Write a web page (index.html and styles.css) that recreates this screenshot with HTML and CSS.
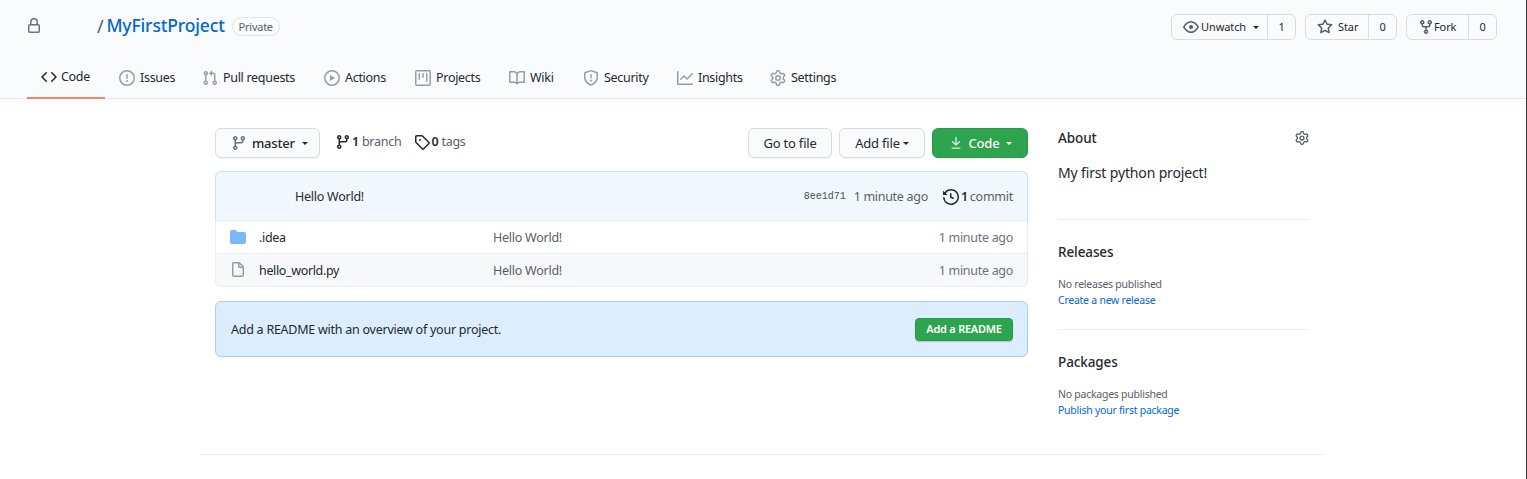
FILE: index.html
```html
<!DOCTYPE html>
<html lang="en">
<head>
<meta charset="utf-8">
<title>MyFirstProject</title>
<link rel="stylesheet" href="styles.css">
</head>
<body>
<svg class="defs" width="0" height="0" aria-hidden="true">
<symbol id="i-code" viewBox="0 0 16 16"><path fill-rule="evenodd" d="M4.72 3.22a.75.75 0 011.06 1.06L2.06 8l3.72 3.72a.75.75 0 11-1.06 1.06L.47 8.53a.75.75 0 010-1.06l4.25-4.25zm6.56 0a.75.75 0 10-1.06 1.06L13.94 8l-3.72 3.72a.75.75 0 101.06 1.06l4.25-4.25a.75.75 0 000-1.06l-4.25-4.25z"/></symbol>
<symbol id="i-issue" viewBox="0 0 16 16"><path fill-rule="evenodd" d="M8 1.5a6.5 6.5 0 100 13 6.5 6.5 0 000-13zM0 8a8 8 0 1116 0A8 8 0 010 8zm9 3a1 1 0 11-2 0 1 1 0 012 0zm-.25-6.25a.75.75 0 00-1.5 0v3.5a.75.75 0 001.5 0v-3.5z"/></symbol>
<symbol id="i-pr" viewBox="0 0 16 16"><path fill-rule="evenodd" d="M7.177 3.073L9.573.677A.25.25 0 0110 .854v4.792a.25.25 0 01-.427.177L7.177 3.427a.25.25 0 010-.354zM3.75 2.5a.75.75 0 100 1.5.75.75 0 000-1.5zm-2.25.75a2.25 2.25 0 113 2.122v5.256a2.251 2.251 0 11-1.5 0V5.372A2.25 2.25 0 011.5 3.25zM11 2.5h-1V4h1a1 1 0 011 1v5.628a2.251 2.251 0 101.5 0V5A2.5 2.5 0 0011 2.5zm1 10.25a.75.75 0 111.5 0 .75.75 0 01-1.5 0zM3.75 12a.75.75 0 100 1.5.75.75 0 000-1.5z"/></symbol>
<symbol id="i-play" viewBox="0 0 16 16"><path fill-rule="evenodd" d="M1.5 8a6.5 6.5 0 1113 0 6.5 6.5 0 01-13 0zM8 0a8 8 0 100 16A8 8 0 008 0zM6.379 5.227A.25.25 0 006 5.442v5.117a.25.25 0 00.379.214l4.264-2.559a.25.25 0 000-.428L6.379 5.227z"/></symbol>
<symbol id="i-project" viewBox="0 0 16 16"><path fill-rule="evenodd" d="M1.75 0A1.75 1.75 0 000 1.75v12.5C0 15.216.784 16 1.75 16h12.5A1.75 1.75 0 0016 14.25V1.75A1.75 1.75 0 0014.25 0H1.75zM1.5 1.75a.25.25 0 01.25-.25h12.5a.25.25 0 01.25.25v12.5a.25.25 0 01-.25.25H1.75a.25.25 0 01-.25-.25V1.75zM11.75 3a.75.75 0 00-.75.75v7.5a.75.75 0 001.5 0v-7.5a.75.75 0 00-.75-.75zm-8.25.75a.75.75 0 011.5 0v5.5a.75.75 0 01-1.5 0v-5.5zM8 3a.75.75 0 00-.75.75v3.5a.75.75 0 001.5 0v-3.5A.75.75 0 008 3z"/></symbol>
<symbol id="i-book" viewBox="0 0 16 16"><path fill-rule="evenodd" d="M0 1.75A.75.75 0 01.75 1h4.253c1.227 0 2.317.59 3 1.501A3.744 3.744 0 0111.006 1h4.245a.75.75 0 01.75.75v10.5a.75.75 0 01-.75.75h-4.507a2.25 2.25 0 00-1.591.659l-.622.621a.75.75 0 01-1.06 0l-.622-.621A2.25 2.25 0 005.258 13H.75a.75.75 0 01-.75-.75V1.75zm8.755 3a2.25 2.25 0 012.25-2.25H14.5v9h-3.757c-.71 0-1.4.201-1.992.572l.004-7.322zm-1.504 7.324l.004-5.073-.002-2.253A2.25 2.25 0 005.003 2.5H1.5v9h3.757a3.75 3.75 0 011.994.574z"/></symbol>
<symbol id="i-shield" viewBox="0 0 16 16"><path fill-rule="evenodd" d="M7.467.133a1.75 1.75 0 011.066 0l5.25 1.68A1.75 1.75 0 0115 3.48V7c0 1.566-.32 3.182-1.303 4.682-.983 1.498-2.585 2.813-5.032 3.855a1.7 1.7 0 01-1.33 0c-2.447-1.042-4.049-2.357-5.032-3.855C1.32 10.182 1 8.566 1 7V3.48a1.75 1.75 0 011.217-1.667l5.25-1.68zm.61 1.429a.25.25 0 00-.153 0l-5.25 1.68a.25.25 0 00-.174.238V7c0 1.358.275 2.666 1.057 3.86.784 1.194 2.121 2.34 4.366 3.297a.2.2 0 00.154 0c2.245-.956 3.582-2.104 4.366-3.298C13.225 9.666 13.5 8.36 13.5 7V3.48a.25.25 0 00-.174-.237l-5.25-1.68zM9 10.5a1 1 0 11-2 0 1 1 0 012 0zm-.25-5.75a.75.75 0 10-1.5 0v3a.75.75 0 001.5 0v-3z"/></symbol>
<symbol id="i-graph" viewBox="0 0 16 16"><path fill-rule="evenodd" d="M1.5 1.75a.75.75 0 00-1.5 0v12.5c0 .414.336.75.75.75h14.5a.75.75 0 000-1.5H1.5V1.75zm14.28 2.53a.75.75 0 00-1.06-1.06L10 7.94 7.53 5.47a.75.75 0 00-1.06 0L3.22 8.72a.75.75 0 001.06 1.06L7 7.06l2.47 2.47a.75.75 0 001.06 0l5.25-5.25z"/></symbol>
<symbol id="i-gear" viewBox="0 0 16 16"><path fill-rule="evenodd" d="M7.429 1.525a6.593 6.593 0 011.142 0c.036.003.108.036.137.146l.289 1.105c.147.56.55.967.997 1.189.174.086.341.183.501.29.417.278.97.423 1.53.27l1.102-.303c.11-.03.175.016.195.046.219.31.41.641.573.989.014.031.022.11-.059.19l-.815.806c-.411.406-.562.957-.53 1.456a4.588 4.588 0 010 .582c-.032.499.119 1.05.53 1.456l.815.806c.08.08.073.159.059.19a6.494 6.494 0 01-.573.99c-.02.029-.086.074-.195.045l-1.103-.303c-.559-.153-1.112-.008-1.529.27-.16.107-.327.204-.5.29-.449.222-.851.628-.998 1.189l-.289 1.105c-.029.11-.101.143-.137.146a6.613 6.613 0 01-1.142 0c-.036-.003-.108-.037-.137-.146l-.289-1.105c-.147-.56-.55-.967-.997-1.189a4.502 4.502 0 01-.501-.29c-.417-.278-.97-.423-1.53-.27l-1.102.303c-.11.03-.175-.016-.195-.046a6.492 6.492 0 01-.573-.989c-.014-.031-.022-.11.059-.19l.815-.806c.411-.406.562-.957.53-1.456a4.587 4.587 0 010-.582c.032-.499-.119-1.05-.53-1.456l-.815-.806c-.08-.08-.073-.159-.059-.19a6.44 6.44 0 01.573-.99c.02-.029.086-.075.195-.045l1.103.303c.559.153 1.112.008 1.529-.27.16-.107.327-.204.5-.29.449-.222.851-.628.998-1.189l.289-1.105c.029-.11.101-.143.137-.146zM8 0c-.236 0-.47.01-.701.03-.743.065-1.29.615-1.458 1.261l-.29 1.106c-.017.066-.078.158-.211.224a5.994 5.994 0 00-.668.386c-.123.082-.233.09-.3.071L3.27 2.776c-.644-.177-1.392.02-1.82.63a7.977 7.977 0 00-.704 1.217c-.315.675-.111 1.422.363 1.891l.815.806c.05.048.098.147.088.294a6.084 6.084 0 000 .772c.01.147-.038.246-.088.294l-.815.806c-.474.469-.678 1.216-.363 1.891.2.428.436.835.704 1.218.428.609 1.176.806 1.82.63l1.103-.303c.066-.019.176-.011.299.071.213.143.436.272.668.386.133.066.194.158.212.224l.289 1.106c.169.646.715 1.196 1.458 1.26a8.094 8.094 0 001.402 0c.743-.064 1.29-.614 1.458-1.26l.29-1.106c.017-.066.078-.158.211-.224a5.98 5.98 0 00.668-.386c.123-.082.233-.09.3-.071l1.102.302c.644.177 1.392-.02 1.82-.63.268-.382.505-.789.704-1.217.315-.675.111-1.422-.364-1.891l-.814-.806c-.05-.048-.098-.147-.088-.294a6.1 6.1 0 000-.772c-.01-.147.039-.246.088-.294l.814-.806c.475-.469.679-1.216.364-1.891a7.992 7.992 0 00-.704-1.218c-.428-.609-1.176-.806-1.82-.63l-1.103.303c-.066.019-.176.011-.299-.071a5.991 5.991 0 00-.668-.386c-.133-.066-.194-.158-.212-.224L10.16 1.29C9.99.645 9.444.095 8.701.031A8.094 8.094 0 008 0zm1.5 8a1.5 1.5 0 11-3 0 1.5 1.5 0 013 0zM11 8a3 3 0 11-6 0 3 3 0 016 0z"/></symbol>
<symbol id="i-lock" viewBox="0 0 16 16"><path fill-rule="evenodd" d="M4 4v2h-.25A1.75 1.75 0 002 7.75v5.5c0 .966.784 1.75 1.75 1.75h8.5A1.75 1.75 0 0014 13.25v-5.5A1.75 1.75 0 0012.25 6H12V4a4 4 0 10-8 0zm6.5 2V4a2.5 2.5 0 00-5 0v2h5zM12 7.5h.25a.25.25 0 01.25.25v5.5a.25.25 0 01-.25.25h-8.5a.25.25 0 01-.25-.25v-5.5a.25.25 0 01.25-.25H12z"/></symbol>
<symbol id="i-eye" viewBox="0 0 16 16"><path fill-rule="evenodd" d="M1.679 7.932c.412-.621 1.242-1.75 2.366-2.717C5.175 4.242 6.527 3.5 8 3.5c1.473 0 2.824.742 3.955 1.715 1.124.967 1.954 2.096 2.366 2.717a.119.119 0 010 .136c-.412.621-1.242 1.75-2.366 2.717C10.825 11.758 9.473 12.5 8 12.5c-1.473 0-2.824-.742-3.955-1.715C2.92 9.818 2.09 8.69 1.679 8.068a.119.119 0 010-.136zM8 2c-1.981 0-3.67.992-4.933 2.078C1.797 5.169.88 6.423.43 7.1a1.619 1.619 0 000 1.798c.45.678 1.367 1.932 2.637 3.024C4.329 13.008 6.019 14 8 14c1.981 0 3.67-.992 4.933-2.078 1.27-1.091 2.187-2.345 2.637-3.023a1.619 1.619 0 000-1.798c-.45-.678-1.367-1.932-2.637-3.023C11.671 2.992 9.981 2 8 2zm0 8a2 2 0 100-4 2 2 0 000 4z"/></symbol>
<symbol id="i-star" viewBox="0 0 16 16"><path fill-rule="evenodd" d="M8 .25a.75.75 0 01.673.418l1.882 3.815 4.21.612a.75.75 0 01.416 1.279l-3.046 2.97.719 4.192a.75.75 0 01-1.088.791L8 12.347l-3.766 1.98a.75.75 0 01-1.088-.79l.72-4.194L.818 6.374a.75.75 0 01.416-1.28l4.21-.611L7.327.668A.75.75 0 018 .25zm0 2.445L6.615 5.5a.75.75 0 01-.564.41l-3.097.45 2.24 2.184a.75.75 0 01.216.664l-.528 3.084 2.769-1.456a.75.75 0 01.698 0l2.77 1.456-.53-3.084a.75.75 0 01.216-.664l2.24-2.183-3.096-.45a.75.75 0 01-.564-.41L8 2.694v.001z"/></symbol>
<symbol id="i-fork" viewBox="0 0 16 16"><path fill-rule="evenodd" d="M5 3.25a.75.75 0 11-1.5 0 .75.75 0 011.5 0zm0 2.122a2.25 2.25 0 10-1.5 0v.878A2.25 2.25 0 005.75 8.5h1.5v2.128a2.251 2.251 0 101.5 0V8.5h1.5a2.25 2.25 0 002.25-2.25v-.878a2.25 2.25 0 10-1.5 0v.878a.75.75 0 01-.75.75h-4.5A.75.75 0 015 6.25v-.878zm3.75 7.378a.75.75 0 11-1.5 0 .75.75 0 011.5 0zm3-8.75a.75.75 0 100-1.5.75.75 0 000 1.5z"/></symbol>
<symbol id="i-branch" viewBox="0 0 16 16"><path fill-rule="evenodd" d="M11.75 2.5a.75.75 0 100 1.5.75.75 0 000-1.5zm-2.25.75a2.25 2.25 0 113 2.122V6A2.5 2.5 0 0110 8.5H6a1 1 0 00-1 1v1.128a2.251 2.251 0 11-1.5 0V5.372a2.25 2.25 0 111.5 0v1.836A2.492 2.492 0 016 7h4a1 1 0 001-1v-.628A2.25 2.25 0 019.5 3.25zM4.25 12a.75.75 0 100 1.5.75.75 0 000-1.5zM3.5 3.25a.75.75 0 111.5 0 .75.75 0 01-1.5 0z"/></symbol>
<symbol id="i-tag" viewBox="0 0 16 16"><path fill-rule="evenodd" d="M2.5 7.775V2.75a.25.25 0 01.25-.25h5.025a.25.25 0 01.177.073l6.25 6.25a.25.25 0 010 .354l-5.025 5.025a.25.25 0 01-.354 0l-6.25-6.25a.25.25 0 01-.073-.177zm-1.5 0V2.75C1 1.784 1.784 1 2.75 1h5.025c.464 0 .91.184 1.238.513l6.25 6.25a1.75 1.75 0 010 2.474l-5.026 5.026a1.75 1.75 0 01-2.474 0l-6.25-6.25A1.75 1.75 0 011 7.775zM6 5a1 1 0 100 2 1 1 0 000-2z"/></symbol>
<symbol id="i-download" viewBox="0 0 16 16"><path fill-rule="evenodd" d="M7.47 10.78a.75.75 0 001.06 0l3.75-3.75a.75.75 0 00-1.06-1.06L8.75 8.44V1.75a.75.75 0 00-1.5 0v6.69L4.78 5.97a.75.75 0 00-1.06 1.06l3.75 3.75zM3.75 13a.75.75 0 000 1.5h8.5a.75.75 0 000-1.5h-8.5z"/></symbol>
<symbol id="i-history" viewBox="0 0 16 16"><path fill-rule="evenodd" d="M1.643 3.143L.427 1.927A.25.25 0 000 2.104V5.75c0 .138.112.25.25.25h3.646a.25.25 0 00.177-.427L2.715 4.215a6.5 6.5 0 11-1.18 4.458.75.75 0 10-1.493.154 8.001 8.001 0 101.6-5.684zM7.75 4a.75.75 0 01.75.75v2.992l2.028.812a.75.75 0 01-.557 1.392l-2.5-1A.75.75 0 017 8.25v-3.5A.75.75 0 017.75 4z"/></symbol>
<symbol id="i-file" viewBox="0 0 16 16"><path fill-rule="evenodd" d="M3.75 1.5a.25.25 0 00-.25.25v11.5c0 .138.112.25.25.25h8.5a.25.25 0 00.25-.25V6H9.75A1.75 1.75 0 018 4.25V1.5H3.75zm5.75.56v2.19c0 .138.112.25.25.25h2.19L9.5 2.06zM2 1.75C2 .784 2.784 0 3.75 0h5.086c.464 0 .909.184 1.237.513l3.414 3.414c.329.328.513.773.513 1.237v8.086A1.75 1.75 0 0112.25 15h-8.5A1.75 1.75 0 012 13.25V1.75z"/></symbol>
<symbol id="i-folder" viewBox="0 0 16 16"><path fill-rule="evenodd" d="M1.75 1A1.75 1.75 0 000 2.75v10.5C0 14.216.784 15 1.75 15h12.5A1.75 1.75 0 0016 13.25v-8.5A1.75 1.75 0 0014.25 3H7.5a.25.25 0 01-.2-.1l-.9-1.2C6.07 1.26 5.55 1 5 1H1.75z"/></symbol>
</svg>

<header class="repo-head">
  <div class="repo-top">
    <div class="repo-title">
      <svg class="icon lock"><use href="#i-lock"/></svg>
      <span class="slash">/</span>
      <a class="repo-name">MyFirstProject</a>
      <span class="pill">Private</span>
    </div>
    <ul class="actions">
      <li class="action w-watch"><span class="act-main"><svg class="icon act-ico"><use href="#i-eye"/></svg>Unwatch<i class="caret"></i></span><span class="act-count">1</span></li>
      <li class="action w-star"><span class="act-main"><svg class="icon act-ico"><use href="#i-star"/></svg>Star</span><span class="act-count">0</span></li>
      <li class="action w-fork"><span class="act-main"><svg class="icon act-ico"><use href="#i-fork"/></svg>Fork</span><span class="act-count">0</span></li>
    </ul>
  </div>
  <nav class="tabs">
    <a class="tab active w1"><svg class="icon tab-ico dark"><use href="#i-code"/></svg>Code</a>
    <a class="tab w2"><svg class="icon tab-ico"><use href="#i-issue"/></svg>Issues</a>
    <a class="tab w3"><svg class="icon tab-ico"><use href="#i-pr"/></svg>Pull requests</a>
    <a class="tab w4"><svg class="icon tab-ico"><use href="#i-play"/></svg>Actions</a>
    <a class="tab w5"><svg class="icon tab-ico"><use href="#i-project"/></svg>Projects</a>
    <a class="tab w6"><svg class="icon tab-ico"><use href="#i-book"/></svg>Wiki</a>
    <a class="tab w7"><svg class="icon tab-ico"><use href="#i-shield"/></svg>Security</a>
    <a class="tab w8"><svg class="icon tab-ico"><use href="#i-graph"/></svg>Insights</a>
    <a class="tab w9"><svg class="icon tab-ico"><use href="#i-gear"/></svg>Settings</a>
  </nav>
</header>

<div class="page">
  <main class="main">
    <div class="toolbar">
      <button class="btn branch-btn"><svg class="icon muted"><use href="#i-branch"/></svg><span>master</span><i class="caret"></i></button>
      <a class="meta"><svg class="icon dark"><use href="#i-branch"/></svg><b>1</b><span>branch</span></a>
      <a class="meta"><svg class="icon dark"><use href="#i-tag"/></svg><b>0</b><span>tags</span></a>
      <div class="tool-right">
        <button class="btn w-goto">Go to file</button>
        <button class="btn w-add">Add file<i class="caret"></i></button>
        <button class="btn green w-code"><svg class="icon light"><use href="#i-download"/></svg><span>Code</span><i class="caret"></i></button>
      </div>
    </div>

    <div class="files">
      <div class="commit">
        <span class="commit-msg txt">Hello World!</span>
        <code class="sha">8ee1d71</code>
        <span class="time txt">1 minute ago</span>
        <span class="history txt"><svg class="icon dark"><use href="#i-history"/></svg><b>1</b><span>commit</span></span>
      </div>
      <div class="row">
        <svg class="icon folder"><use href="#i-folder"/></svg>
        <a class="fname txt">.idea</a>
        <span class="fmsg txt">Hello World!</span>
        <span class="ftime txt">1 minute ago</span>
      </div>
      <div class="row alt">
        <svg class="icon file"><use href="#i-file"/></svg>
        <a class="fname txt">hello_world.py</a>
        <span class="fmsg txt">Hello World!</span>
        <span class="ftime txt">1 minute ago</span>
      </div>
    </div>

    <div class="readme">
      <span class="txt">Add a README with an overview of your project.</span>
      <button class="readme-btn">Add a README</button>
    </div>
  </main>

  <aside class="side">
    <section class="about">
      <h2 class="about-head"><span>About</span><svg class="icon gear-dark"><use href="#i-gear"/></svg></h2>
      <p class="desc">My first python project!</p>
    </section>
    <section class="block">
      <h2>Releases</h2>
      <p class="small note">No releases published</p>
      <a class="small link">Create a new release</a>
    </section>
    <section class="block">
      <h2>Packages</h2>
      <p class="small note">No packages published</p>
      <a class="small link">Publish your first package</a>
    </section>
  </aside>
</div>
<footer class="foot"></footer>
</body>
</html>
```
FILE: styles.css
```css
* { box-sizing: border-box; }
html, body { margin: 0; padding: 0; height: 479px; overflow: hidden; }
body {
  background: #fff;
  color: #24292e;
  font-family: "Noto Sans", "Open Sans", sans-serif;
  font-size: 12.5px;
  letter-spacing: -.25px;
  line-height: 20px;
  border-right: 1px solid #3a3a3a;
}
.defs { position: absolute; }
.icon { width: 16px; height: 16px; fill: currentColor; flex: none; display: block; }
.dark { color: #24292e; }
.muted { color: #6a737d; }
.light { color: rgba(255,255,255,.8); }
.txt { margin-top: 2px; }

.repo-head { height: 99px; background: #fafbfc; border-bottom: 1px solid #e1e4e8; }
.repo-top { height: 58px; display: flex; justify-content: space-between; padding: 14px 29px 0 26px; }
.repo-title { display: flex; align-items: center; height: 24px; }
.lock { color: #6a737d; }
.slash { margin-left: 55px; font-size: 18px; color: #586069; }
.repo-name { margin: 0 0 2px 3px; font-size: 17.5px; font-weight: 500; color: #0366d6; letter-spacing: -.15px; }
.pill { margin-left: 7px; border: 1px solid #e1e4e8; border-radius: 10px; height: 19px; width: 48px; font-size: 11px; line-height: 17px; text-align: center; color: #586069; }

.actions { list-style: none; margin: 0; padding: 0; display: flex; gap: 9px; }
.action { display: flex; height: 26px; border: 1px solid #d9dcdf; border-radius: 6px; font-size: 11px; line-height: 24px; background: #fafbfc; letter-spacing: -.1px; }
.act-main { display: flex; align-items: center; flex: 1; padding-left: 11px; border-right: 1px solid #dcdfe2; }
.act-ico { color: #586069; margin-right: 2px; }
.act-count { width: 27px; text-align: center; }
.w-watch { width: 125px; }
.w-star { width: 92px; }
.w-star .act-ico { margin-right: 5px; }
.w-fork { width: 91px; }
.w-fork .act-ico { margin-right: 0; }
.caret { display: inline-block; width: 0; height: 0; margin-left: 7px; border: 3.5px solid transparent; border-top-color: currentColor; border-bottom: 0; }

.tabs { display: flex; height: 41px; padding-left: 27px; }
.tab { display: flex; align-items: center; height: 41px; padding: 0 0 2px 14px; color: #24292e; letter-spacing: -.3px; }
.tab-ico { margin-right: 5px; color: #959da5; }
.tab-ico.dark { color: #24292e; margin-right: 4px; }
.active { border-bottom: 2px solid #f9826c; }
.w1 { width: 78px; }
.w2 { width: 83px; }
.w3 { width: 122px; }
.w4 { width: 91px; }
.w5 { width: 94px; }
.w6 { width: 74px; }
.w7 { width: 94px; }
.w8 { width: 93px; }
.w9 { width: 90px; }

.page { display: flex; margin-left: 215px; width: 1094px; padding-top: 29px; gap: 30px; height: 355px; }
.main { width: 813px; flex: none; }
.side { flex: 1; }

.toolbar { display: flex; align-items: center; height: 30px; }
.btn { display: flex; align-items: center; justify-content: center; height: 30px; padding: 0; border: 1px solid #d9dbde; border-radius: 6px; background: #fafbfc; color: #24292e; font: inherit; font-size: 13px; letter-spacing: -.2px; box-shadow: 0 1px 0 rgba(27,31,35,.04); }
.branch-btn { width: 105px; justify-content: flex-start; padding-left: 15px; font-weight: 500; }
.branch-btn .icon { margin-right: 5px; }
.meta { display: flex; align-items: center; color: #586069; margin-left: 15px; padding-bottom: 3px; }
.meta + .meta { margin-left: 13px; }
.meta b { font-weight: 600; color: #24292e; margin-left: 1px; }
.meta span { margin-left: 3px; }
.tool-right { margin-left: auto; display: flex; gap: 7px; }
.w-goto { width: 84px; }
.w-add { width: 86px; }
.w-add .caret { margin-left: 3px; }
.w-code { width: 96px; }
.green { background: #2ea44f; border-color: #2a9a4a; color: #fff; font-weight: 500; }
.green .icon { margin-right: 5px; transform: scale(.9); }

.files { margin-top: 13px; height: 116px; }
.commit { display: flex; align-items: center; height: 50px; padding: 0 14px 0 79px; background: #f1f8ff; border: 1px solid #c8e1ff; border-bottom-color: #dfe9f3; border-radius: 6px 6px 0 0; }
.commit-msg { margin-right: auto; color: #24292e; }
.sha { font-family: "Liberation Mono", monospace; font-size: 10px; letter-spacing: 0; color: #444d56; margin: 2px 8px 0 0; }
.time { color: #586069; letter-spacing: -.3px; }
.history { display: flex; align-items: center; margin-left: 15px; color: #586069; }
.history .icon { margin-right: 2px; }
.history b { font-weight: 600; color: #24292e; margin-right: 2px; }
.row { display: flex; align-items: center; height: 33px; padding: 0 14px; border: 1px solid #eaecef; border-top: 0; }
.row:last-child { border-bottom-left-radius: 6px; border-bottom-right-radius: 6px; }
.alt { background: #f6f8fa; }
.folder { color: #79b8ff; }
.file { color: #959da5; }
.fname { margin-left: 13px; width: 234px; flex: none; letter-spacing: -.35px; }
.fmsg { color: #586069; }
.ftime { margin-left: auto; color: #6a737d; letter-spacing: -.3px; }

.readme { display: flex; align-items: center; justify-content: space-between; margin-top: 14px; height: 56px; padding: 0 14px 0 15px; background: #dbedff; border: 1px solid #b0cbe8; border-radius: 6px; }
.readme-btn { height: 23px; width: 98px; padding: 0; border: 1px solid #2a9a4a; border-radius: 4px; background: #2ea44f; color: #fff; font: 600 11px/20px "Noto Sans", sans-serif; letter-spacing: -.25px; box-shadow: 0 1px 1px rgba(27,31,35,.2); }

h2 { margin: 0; font-size: 13.5px; font-weight: 500; line-height: 20px; letter-spacing: -.1px; }
.about { height: 92px; border-bottom: 1px solid #eaecef; }
.about-head { display: flex; justify-content: space-between; align-items: center; }
.gear-dark { color: #586069; width: 14px; height: 14px; }
.desc { margin: 15px 0 0; font-size: 14px; letter-spacing: -.15px; color: #24292e; }
.block { padding-top: 22px; height: 110px; border-bottom: 1px solid #eaecef; }
.block:last-child { border-bottom: 0; }
.small { display: block; margin: 0; font-size: 10.5px; line-height: 16px; color: #586069; }
.note { margin-top: 14px; }
.link { color: #0366d6; }

.foot { margin-left: 200px; width: 1124px; border-top: 1px solid #eaecef; }
```
